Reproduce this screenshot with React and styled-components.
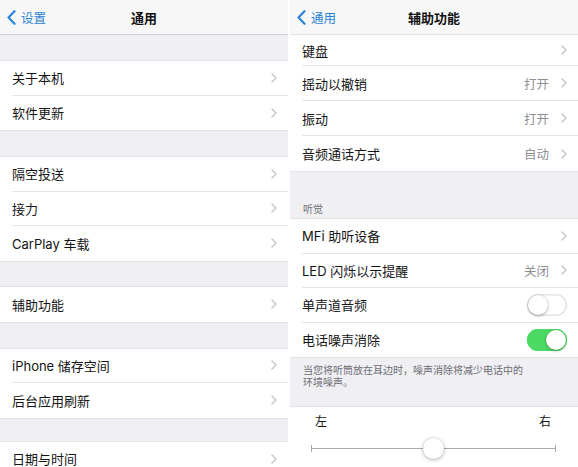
import styled, { createGlobalStyle } from "styled-components";

const GlobalStyle = createGlobalStyle`
    * { box-sizing: border-box; }
    body {
        margin: 0;
        background: #ffffff;
        font-family: "Inter", "Noto Sans CJK SC", sans-serif;
        -webkit-font-smoothing: antialiased;
    }
`;

const BLUE = "#2a83d6";

function Chevron() {
    return (
        <svg width="6" height="10" viewBox="0 0 6 10">
            <path d="M1 1 L5 5 L1 9" fill="none" stroke="#c4c4c9" strokeWidth="1.4" strokeLinecap="round" strokeLinejoin="round" />
        </svg>
    );
}

function BackChevron() {
    return (
        <svg width="9" height="15" viewBox="0 0 9 15">
            <path d="M7.5 1.2 L1.5 7.5 L7.5 13.8" fill="none" stroke={BLUE} strokeWidth="2.2" strokeLinecap="round" strokeLinejoin="round" />
        </svg>
    );
}

function NavBar({ back, title }) {
    return (
        <Nav>
            <Back>
                <BackChevron />
                <span>{back}</span>
            </Back>
            <Title>{title}</Title>
            <span />
        </Nav>
    );
}

function Cell({ label, value, toggle, h, arrow = true }) {
    return (
        <Row $h={h}>
            <RowBody>
                <Label>{label}</Label>
                {value && <Value>{value}</Value>}
                {toggle !== undefined ? <Toggle $on={toggle} /> : arrow && <Chevron />}
            </RowBody>
        </Row>
    );
}

function Slider({ value }) {
    return (
        <SliderBox>
            <SliderLabels>
                <span>左</span>
                <span>右</span>
            </SliderLabels>
            <Track>
                <Tick $side="left" />
                <Tick $side="right" />
                <Thumb style={{ left: `${value * 100}%` }} />
            </Track>
        </SliderBox>
    );
}

export default function App() {
    return (
        <>
            <GlobalStyle />
            <Screen>
                <Panel>
                    <NavBar back="设置" title="通用" />
                    <Spacer $h={26} />
                    <Group>
                        <Cell label="关于本机" />
                        <Cell label="软件更新" />
                    </Group>
                    <Spacer $h={27} />
                    <Group>
                        <Cell label="隔空投送" />
                        <Cell label="接力" />
                        <Cell label="CarPlay 车载" />
                    </Group>
                    <Spacer $h={26.5} />
                    <Group>
                        <Cell label="辅助功能" />
                    </Group>
                    <Spacer $h={27} />
                    <Group>
                        <Cell label="iPhone 储存空间" />
                        <Cell label="后台应用刷新" />
                    </Group>
                    <Spacer $h={24} />
                    <Group $grow>
                        <Cell label="日期与时间" />
                    </Group>
                </Panel>

                <Panel>
                    <NavBar back="通用" title="辅助功能" />
                    <Group>
                        <Cell label="键盘" h={31} />
                        <Cell label="摇动以撤销" value="打开" h={35} />
                        <Cell label="振动" value="打开" h={35} />
                        <Cell label="音频通话方式" value="自动" h={35} />
                    </Group>
                    <SectionHeader>听觉</SectionHeader>
                    <Group>
                        <Cell label="MFi 助听设备" />
                        <Cell label="LED 闪烁以示提醒" value="关闭" />
                        <Cell label="单声道音频" toggle={false} />
                        <Cell label="电话噪声消除" toggle={true} />
                    </Group>
                    <Footer>
                        <p>当您将听筒放在耳边时，噪声消除将减少电话中的环境噪声。</p>
                    </Footer>
                    <Group $grow>
                        <Slider value={0.502} />
                    </Group>
                </Panel>
            </Screen>
        </>
    );
}

const Screen = styled.div`
    display: flex;
    gap: 2px;
    width: 578px;
    height: 467px;
    overflow: hidden;
`;

const Panel = styled.div`
    width: 288px;
    height: 467px;
    display: flex;
    flex-direction: column;
    background: #efeff4;
    overflow: hidden;
`;

const Nav = styled.header`
    flex: none;
    display: grid;
    grid-template-columns: 1fr auto 1fr;
    align-items: center;
    height: 35px;
    background: #f7f7f8;
    border-bottom: 1px solid #d0d0d4;
`;

const Back = styled.div`
    display: flex;
    align-items: center;
    gap: 5px;
    padding-left: 7px;
    color: ${BLUE};
    font-size: 12.5px;
`;

const Title = styled.div`
    font-size: 13px;
    font-weight: 600;
    color: #111;
`;

const Spacer = styled.div`
    flex: none;
    height: ${props => props.$h}px;
`;

const Group = styled.div`
    flex: ${props => props.$grow ? "1" : "none"};
    background: #ffffff;
    box-shadow: 0 -1px 0 #e2e2e6, 0 1px 0 #e2e2e6;
`;

const Row = styled.div`
    height: ${props => props.$h || 34.5}px;
    padding-left: 12px;
    display: flex;

    &:not(:last-child) > div {
        border-bottom: 1px solid #e4e4e8;
    }
`;

const RowBody = styled.div`
    flex: 1;
    display: flex;
    align-items: center;
    gap: 12px;
    padding-right: 11px;
`;

const Label = styled.span`
    flex: 1;
    font-size: 13px;
    color: #141414;
`;

const Value = styled.span`
    font-size: 12.5px;
    color: #8e8e93;
`;

const Toggle = styled.span`
    position: relative;
    width: 40px;
    height: 22px;
    border-radius: 11px;
    background: ${props => props.$on ? "#4cd964" : "#ffffff"};
    box-shadow: inset 0 0 0 1.5px ${props => props.$on ? "#4cd964" : "#e3e3e8"};

    &::after {
        content: "";
        position: absolute;
        top: 1px;
        left: ${props => props.$on ? "19px" : "1px"};
        width: 20px;
        height: 20px;
        border-radius: 50%;
        background: #ffffff;
        box-shadow: 0 1px 3px rgba(0, 0, 0, 0.3), 0 0 0 0.5px rgba(0, 0, 0, 0.08);
    }
`;

const SectionHeader = styled.div`
    flex: none;
    height: 48px;
    padding: 30px 13px 0;
    font-size: 10px;
    color: #6d6d72;
`;

const Footer = styled.div`
    flex: none;
    height: 50px;
    padding: 7px 13px 0;

    p {
        margin: 0;
        width: 226px;
        font-size: 10px;
        line-height: 12px;
        color: #6d6d72;
    }
`;

const SliderBox = styled.div`
    padding: 8px 22px 0 21px;
`;

const SliderLabels = styled.div`
    display: flex;
    justify-content: space-between;
    padding: 0 5px 0 4px;
    font-size: 12px;
    line-height: 14px;
    color: #141414;
`;

const Track = styled.div`
    position: relative;
    height: 22px;
    margin-top: 8px;

    &::before {
        content: "";
        position: absolute;
        left: 0;
        right: 0;
        top: 11px;
        height: 1px;
        background: #a8a8ad;
    }
`;

const Tick = styled.span`
    position: absolute;
    top: 8px;
    ${props => props.$side}: 0;
    width: 1px;
    height: 7px;
    background: #a8a8ad;
`;

const Thumb = styled.span`
    position: absolute;
    top: 1px;
    width: 21px;
    height: 21px;
    margin-left: -10.5px;
    border-radius: 50%;
    background: #ffffff;
    box-shadow: 0 1px 4px rgba(0, 0, 0, 0.28), 0 0 0 0.5px rgba(0, 0, 0, 0.08);
`;
